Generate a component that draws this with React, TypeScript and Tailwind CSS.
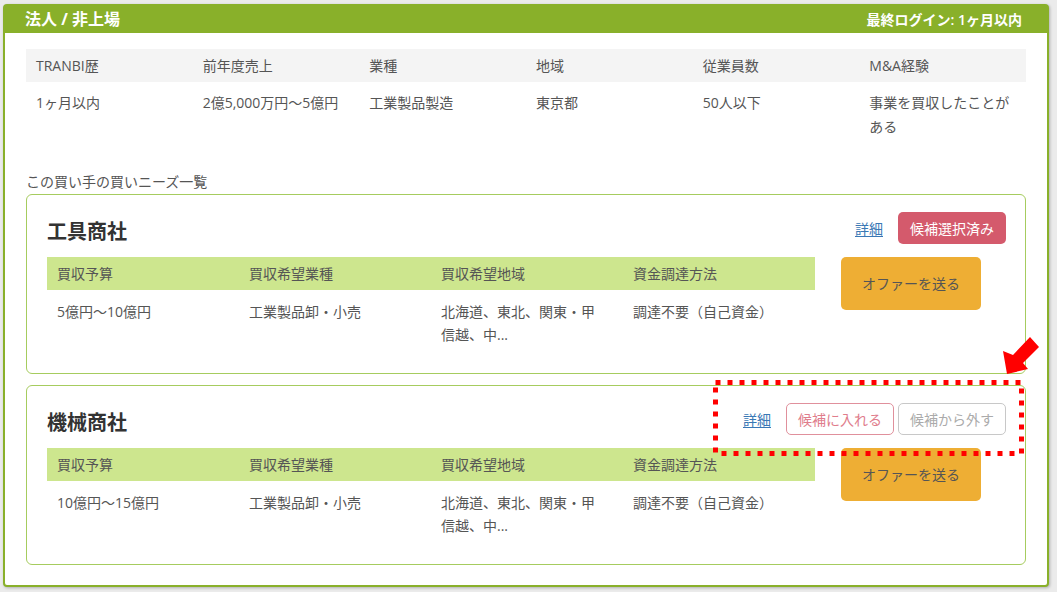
import React from "react";

const font = { fontFamily: '"Open Sans", "Noto Sans CJK JP", sans-serif' };

type Need = {
  title: string;
  budget: string;
  selected: boolean;
};

const needs: Need[] = [
  { title: "工具商社", budget: "5億円〜10億円", selected: true },
  { title: "機械商社", budget: "10億円〜15億円", selected: false },
];

function NeedCard({ need, first }: { need: Need; first: boolean }) {
  return (
    <div
      className={`border border-[#a6cc5e] rounded-[6px] pt-[17px] pl-[20px] pr-[19px] pb-[27px] ${
        first ? "" : "mt-[11px]"
      }`}
    >
      <div className="flex items-start justify-between">
        <div className="h-[40px] flex items-center text-[20px] font-bold text-[#333] leading-none">
          {need.title}
        </div>
        <div className="flex items-center h-[32px]">
          <a className="text-[14px] text-[#3a78b5] underline underline-offset-2 mr-[15px] cursor-pointer">
            詳細
          </a>
          {need.selected ? (
            <button className="w-[108px] h-[32px] rounded-[5px] bg-[#d45a6c] text-white text-[14px]">
              候補選択済み
            </button>
          ) : (
            <>
              <button className="w-[108px] h-[32px] rounded-[5px] border-[1.5px] border-[#e0909c] bg-white text-[#e07d8c] text-[14px]">
                候補に入れる
              </button>
              <button className="ml-[4px] w-[108px] h-[32px] rounded-[5px] border-[1.5px] border-[#c8c8c8] bg-white text-[#ababab] text-[14px]">
                候補から外す
              </button>
            </>
          )}
        </div>
      </div>
      <div className="flex items-start mt-[5px]">
        <div className="w-[768px]">
          <div className="grid grid-cols-4 h-[33px] bg-[#cde68e] items-center text-[14px] text-[#555]">
            <div className="pl-[10px]">買収予算</div>
            <div className="pl-[10px]">買収希望業種</div>
            <div className="pl-[10px]">買収希望地域</div>
            <div className="pl-[10px]">資金調達方法</div>
          </div>
          <div className="grid grid-cols-4 pt-[10px] text-[14px] leading-[23px] text-[#555]">
            <div className="pl-[10px] pr-[20px]">{need.budget}</div>
            <div className="pl-[10px] pr-[20px]">工業製品卸・小売</div>
            <div className="pl-[10px] pr-[20px]">北海道、東北、関東・甲信越、中...</div>
            <div className="pl-[10px] pr-[20px]">調達不要（自己資金）</div>
          </div>
        </div>
        <button className="ml-[26px] w-[140px] h-[53px] rounded-[5px] bg-[#eeae34] text-[#555] text-[14px]">
          オファーを送る
        </button>
      </div>
    </div>
  );
}

export default function App() {
  const infoHeads = ["TRANBI歴", "前年度売上", "業種", "地域", "従業員数", "M&A経験"];
  const infoVals = [
    "1ヶ月以内",
    "2億5,000万円〜5億円",
    "工業製品製造",
    "東京都",
    "50人以下",
    "事業を買収したことがある",
  ];
  return (
    <div className="relative w-[1057px] h-[592px] bg-[#ebebeb] overflow-hidden pt-[4px] pl-[3px]" style={font}>
      <div className="w-[1046px] bg-white border-2 border-[#89b02a] rounded-[4px] shadow-[1px_1px_3px_rgba(0,0,0,0.25)]">
        <div className="h-[28px] -mt-[1px] bg-[#89b02a] flex items-center justify-between pl-[20px] pr-[25px] text-white">
          <div className="text-[16px] font-bold">法人 / 非上場</div>
          <div className="text-[14px] font-semibold">最終ログイン: 1ヶ月以内</div>
        </div>
        <div className="px-[21px] pt-[16px] pb-[20px]">
          <div className="grid grid-cols-6 h-[33px] bg-[#f4f4f4] items-center text-[14px] text-[#555]">
            {infoHeads.map((h) => (
              <div key={h} className="pl-[10px]">
                {h}
              </div>
            ))}
          </div>
          <div className="grid grid-cols-6 pt-[9px] text-[14px] leading-[24px] text-[#555]">
            {infoVals.map((v) => (
              <div key={v} className="pl-[10px] pr-[10px]">
                {v}
              </div>
            ))}
          </div>
          <div className="mt-[33px] mb-[2px] text-[14px] leading-[20px] text-[#555]">
            この買い手の買いニーズ一覧
          </div>
          {needs.map((n, i) => (
            <NeedCard key={n.title} need={n} first={i === 0} />
          ))}
        </div>
      </div>

      <svg className="absolute left-[713px] top-[380px]" width="312" height="76" viewBox="0 0 312 76">
        <rect
          x="2.5"
          y="2.5"
          width="306"
          height="71"
          fill="none"
          stroke="#ff0000"
          strokeWidth="5"
          strokeDasharray="5 7"
        />
      </svg>
      <svg className="absolute left-[995px] top-[330px]" width="50" height="50" viewBox="995 330 50 50">
        <polygon
          points="1007,374 1003,351 1013,355 1030,337 1039,347 1023,363 1028,369"
          fill="#ff0000"
        />
      </svg>
    </div>
  );
}
